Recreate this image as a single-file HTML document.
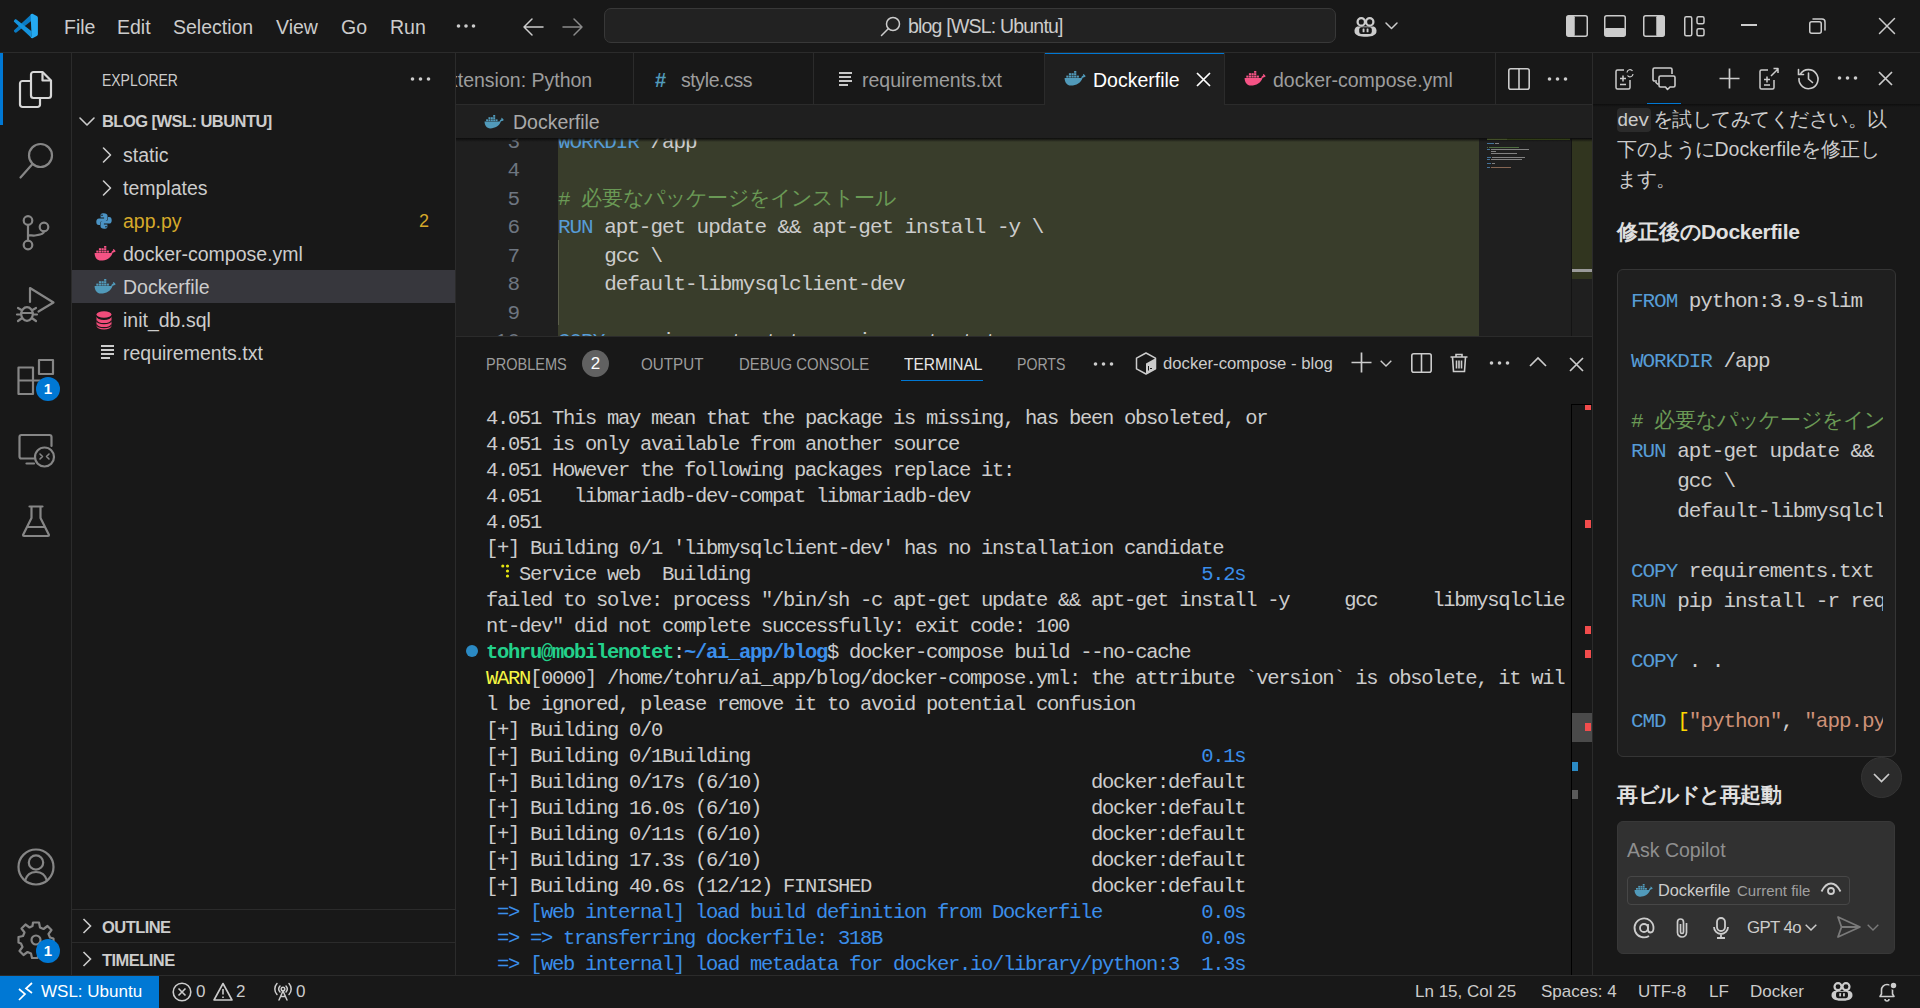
<!DOCTYPE html>
<html><head><meta charset="utf-8">
<style>
*{box-sizing:border-box;margin:0;padding:0}
html,body{width:1920px;height:1008px;overflow:hidden;background:#181818}
body{position:relative;font-family:"Liberation Sans",sans-serif;color:#cccccc;font-size:19.5px}
.a{position:absolute;white-space:pre}
.m{font-family:"Liberation Mono",monospace}
svg{position:absolute;overflow:visible}
.ic{fill:none;stroke:#cccccc;stroke-width:1.5;stroke-linecap:round;stroke-linejoin:round}
.hl{height:1px;background:#2b2b2b}
.vl{width:1px;background:#2b2b2b}
.j{display:inline-block;width:1em;letter-spacing:0;text-indent:0;overflow:visible}
</style></head><body>

<svg width="0" height="0" style="position:absolute">
<defs>
<symbol id="whale" viewBox="0 0 22 15">
 <path d="M0.6 7 H17.2 C17.4 5.6 18.3 4.6 19.3 4.4 L18.9 2.9 C20.2 3.2 21.6 4.3 21.6 5.6 C20.6 6.3 19.6 6.4 18.6 6.8 C17.3 11.8 12.2 14.6 7 14.6 C2.8 14.6 0.6 11 0.6 7 Z"/>
 <rect x="2.3" y="4.6" width="2.2" height="2"/><rect x="4.9" y="4.6" width="2.2" height="2"/><rect x="7.5" y="4.6" width="2.2" height="2"/><rect x="10.1" y="4.6" width="2.2" height="2"/><rect x="12.7" y="4.6" width="2.2" height="2"/>
 <rect x="4.9" y="2.2" width="2.2" height="2"/><rect x="7.5" y="2.2" width="2.2" height="2"/><rect x="10.1" y="2.2" width="2.2" height="2"/>
 <rect x="10.1" y="-0.2" width="2.2" height="2"/>
</symbol>
<symbol id="py" viewBox="0 0 16 16">
 <path d="M7.8 0.3 C4.6 0.3 4.6 1.7 4.6 2.8 V4.6 H8.1 V5.4 H3 C1.2 5.4 0.3 6.7 0.3 8.8 C0.3 10.9 1.2 12.1 2.8 12.1 H4 V10.3 C4 9 5 7.9 6.4 7.9 H9.6 C10.7 7.9 11.5 7.1 11.5 6 V2.8 C11.5 1.4 10.2 0.3 7.8 0.3 Z M6 1.5 A0.8 0.8 0 1 1 6 3.1 A0.8 0.8 0 1 1 6 1.5 Z" fill-rule="evenodd"/>
 <path d="M8.2 15.7 C11.4 15.7 11.4 14.3 11.4 13.2 V11.4 H7.9 V10.6 H13 C14.8 10.6 15.7 9.3 15.7 7.2 C15.7 5.1 14.8 3.9 13.2 3.9 H12 V5.7 C12 7 11 8.1 9.6 8.1 H6.4 C5.3 8.1 4.5 8.9 4.5 10 V13.2 C4.5 14.6 5.8 15.7 8.2 15.7 Z M10 14.5 A0.8 0.8 0 1 1 10 12.9 A0.8 0.8 0 1 1 10 14.5 Z" fill-rule="evenodd"/>
</symbol>
<symbol id="cop" viewBox="0 0 23 20">
 <path d="M3.2 9.5 C0.8 10.5 0 13 0.7 15.5 C1.8 18.8 6.5 19.8 11.5 19.8 C16.5 19.8 21.2 18.8 22.3 15.5 C23 13 22.2 10.5 19.8 9.5 Z" fill="#cccccc"/>
 <circle cx="7.3" cy="4.9" r="3.7" fill="none" stroke="#cccccc" stroke-width="2.3"/>
 <circle cx="15.7" cy="4.9" r="3.7" fill="none" stroke="#cccccc" stroke-width="2.3"/>
 <rect x="5.2" y="10.2" width="12.6" height="6.8" rx="2.2" fill="#181818"/>
 <rect x="8.6" y="11.6" width="1.9" height="3.6" rx="0.5" fill="#cccccc"/><rect x="12.6" y="11.6" width="1.9" height="3.6" rx="0.5" fill="#cccccc"/>
</symbol>
</defs></svg>
<!-- ============ TITLE BAR ============ -->
<div class="a" style="left:0;top:0;width:1920px;height:52px;background:#181818"></div>
<div class="a hl" style="left:0;top:52px;width:1920px"></div>
<!-- logo -->
<svg style="left:8px;top:8px" width="36" height="36" viewBox="0 0 36 36">
 <path d="M23.6 6 L23.6 12.8 L8.4 24.4 C7.8 24.8 7.2 24.8 6.7 24.3 L6.1 23.6 C5.7 23.1 5.8 22.5 6.3 22.1 Z" fill="#0a7ac2"/>
 <path d="M6.3 13.9 C5.8 13.5 5.7 12.9 6.1 12.4 L6.7 11.7 C7.2 11.2 7.8 11.2 8.4 11.6 L23.6 23.2 L23.6 30 Z" fill="#1593dd"/>
 <path d="M22.6 6.4 C23.3 5.8 24.2 5.7 25 6.1 L28.8 7.9 C29.5 8.3 29.9 8.9 29.9 9.7 V26.3 C29.9 27.1 29.5 27.7 28.8 28.1 L25 29.9 C24.2 30.3 23.3 30.2 22.6 29.6 L23.6 28.5 Z" fill="#25aaf2"/>
</svg>
<div class="a" style="left:64px;top:1px;height:52px;line-height:52px">File</div>
<div class="a" style="left:117px;top:1px;height:52px;line-height:52px">Edit</div>
<div class="a" style="left:173px;top:1px;height:52px;line-height:52px">Selection</div>
<div class="a" style="left:276px;top:1px;height:52px;line-height:52px">View</div>
<div class="a" style="left:341px;top:1px;height:52px;line-height:52px">Go</div>
<div class="a" style="left:390px;top:1px;height:52px;line-height:52px">Run</div>
<svg style="left:456px;top:22px" width="20" height="8"><circle cx="2.5" cy="4" r="1.8" fill="#ccc"/><circle cx="10" cy="4" r="1.8" fill="#ccc"/><circle cx="17.5" cy="4" r="1.8" fill="#ccc"/></svg>
<svg style="left:523px;top:18px" width="22" height="18" class="ic"><path d="M1 9 H20 M9 1 L1 9 L9 17" /></svg>
<svg style="left:562px;top:18px" width="22" height="18" class="ic" style="stroke:#888"><path d="M1 9 H20 M12 1 L20 9 L12 17" stroke="#8a8a8a"/></svg>
<!-- command center -->
<div class="a" style="left:604px;top:8px;width:732px;height:35px;border:1px solid #383838;border-radius:7px;background:#222222"></div>
<svg style="left:880px;top:16px" width="22" height="22" class="ic"><circle cx="13" cy="8" r="6.5"/><path d="M8.5 12.5 L1.5 19.5"/></svg>
<div class="a" style="left:908px;top:9px;height:35px;line-height:35px;letter-spacing:-0.8px">blog [WSL: Ubuntu]</div>
<!-- copilot icon -->
<svg style="left:1354px;top:17px" width="23" height="20"><use href="#cop"/></svg>
<svg style="left:1385px;top:22px" width="13" height="8" class="ic"><path d="M1 1 L6.5 6.5 L12 1"/></svg>
<!-- layout icons -->
<svg style="left:1566px;top:15px" width="22" height="22"><rect x="0.75" y="0.75" width="20.5" height="20.5" rx="2" fill="none" stroke="#ccc" stroke-width="1.5"/><rect x="0.75" y="0.75" width="8" height="20.5" rx="1.5" fill="#ccc"/></svg>
<svg style="left:1604px;top:15px" width="22" height="22"><rect x="0.75" y="0.75" width="20.5" height="20.5" rx="2" fill="none" stroke="#ccc" stroke-width="1.5"/><rect x="0.75" y="13" width="20.5" height="8.25" rx="1.5" fill="#ccc"/></svg>
<svg style="left:1643px;top:15px" width="22" height="22"><rect x="0.75" y="0.75" width="20.5" height="20.5" rx="2" fill="none" stroke="#ccc" stroke-width="1.5"/><rect x="13.25" y="0.75" width="8" height="20.5" rx="1.5" fill="#ccc"/></svg>
<svg style="left:1684px;top:16px" width="22" height="22" class="ic"><rect x="0.75" y="0.75" width="7" height="19" rx="1.5"/><rect x="13" y="0.75" width="7" height="7" rx="1.5"/><rect x="13" y="12.75" width="7" height="7" rx="1.5"/></svg>
<!-- window controls -->
<div class="a" style="left:1741px;top:24px;width:16px;height:2px;background:#ccc"></div>
<svg style="left:1809px;top:18px" width="17" height="16" class="ic"><rect x="0.75" y="3.75" width="11.5" height="11.5" rx="2"/><path d="M4 1 H13 A3 3 0 0 1 16 4 V12"/></svg>
<svg style="left:1879px;top:18px" width="16" height="16" class="ic" style="stroke-linecap:butt"><path d="M0.5 0.5 L15.5 15.5 M15.5 0.5 L0.5 15.5"/></svg>

<!-- ============ ACTIVITY BAR ============ -->
<div class="a vl" style="left:71px;top:53px;height:922px"></div>
<div class="a" style="left:0;top:53px;width:3px;height:72px;background:#0078d4"></div>
<!-- explorer -->
<svg style="left:19px;top:71px" width="34" height="37" viewBox="0 0 34 37" fill="none" stroke="#d7d7d7" stroke-width="2.2" stroke-linejoin="round">
 <path d="M11 10 H3.5 A2.5 2.5 0 0 0 1 12.5 V33.5 A2.5 2.5 0 0 0 3.5 36 H18.5 A2.5 2.5 0 0 0 21 33.5 V27"/>
 <path d="M12 3.5 A2.5 2.5 0 0 1 14.5 1 H23.5 L32 9.5 V24.5 A2.5 2.5 0 0 1 29.5 27 H14.5 A2.5 2.5 0 0 1 12 24.5 Z"/>
 <path d="M23.5 1 V9.5 H32"/>
</svg>
<!-- search -->
<svg style="left:0;top:0" width="72" height="975" fill="none" stroke="#868686" stroke-width="2.2" stroke-linecap="round" stroke-linejoin="round">
 <circle cx="40.5" cy="155.5" r="11.5"/><path d="M32.5 164 L20.5 177.5"/>
 <!-- scm -->
 <circle cx="28" cy="220.5" r="4.3"/><circle cx="44" cy="227" r="4.3"/><circle cx="28" cy="245" r="4.3"/>
 <path d="M28 225 V240.5"/><path d="M28 237 C28 234 31 236 35 235.5 C40 235 44 234 44 231.3"/>
 <!-- run & debug -->
 <path d="M30 302 V288 L53.5 302.5 L38.5 311.5"/>
 <ellipse cx="27" cy="314" rx="5.8" ry="6.8"/><path d="M21.2 313 H32.8 M18 308 L21.5 310 M36 308 L32.5 310 M17 314.5 H21 M37 314.5 H33 M18 321 L21.5 318.5 M36 321 L32.5 318.5"/>
 <!-- extensions -->
 <path d="M18.5 367.5 H33 V394 H18.5 Z M18.5 380.5 H33 M33 380.5 H40 M39 360 H53 V374 H39 Z"/>
 <!-- remote explorer -->
 <path d="M34 458.5 H21.5 A2 2 0 0 1 19.5 456.5 V437 A2 2 0 0 1 21.5 435 H49.5 A2 2 0 0 1 51.5 437 V446"/><path d="M26.5 463.5 H34"/>
 <circle cx="44.5" cy="457" r="9.5"/><path d="M40 454 L42.5 456.5 L40 459 M49 454 L46.5 456.5 L49 459" stroke-width="1.6"/>
 <!-- testing -->
 <path d="M29.5 506.5 H42.5 M31.5 506.5 V518 L23 535 A1 1 0 0 0 24 536 H48 A1 1 0 0 0 49 535 L40.5 518 V506.5 M27 527 H45"/>
 <!-- account -->
 <circle cx="36" cy="867" r="17.5"/><circle cx="36" cy="862.5" r="7.2"/><path d="M25 880.5 C27 874 31.5 872 36 872 C40.5 872 45 874 47 880.5"/>
</svg>
<!-- gear -->
<svg style="left:17px;top:921px" width="38" height="38" viewBox="-19 -19 38 38" fill="none" stroke="#868686" stroke-width="2.2" stroke-linejoin="round">
 <path d="M-3 -17.5 H3 L4 -12.5 L7.5 -11 L11.5 -14 L15.5 -10 L12.5 -6 L14 -2.5 L17.5 -1.5 V4 L12.5 5 L11 8.5 L14 12.5 L10 16.5 L6 13.5 L2.5 15 L1.5 18 H-4 L-5 13.5 L-8.5 12 L-12.5 15 L-16.5 11 L-13.5 7 L-15 3.5 L-17.5 2.5 V-3 L-13 -4 L-11.5 -7.5 L-14.5 -11.5 L-10.5 -15.5 L-6.5 -12.5 L-3.5 -14 Z"/>
 <circle cx="0" cy="0" r="4.5"/>
</svg>
<!-- badges -->
<div class="a" style="left:36px;top:377px;width:24px;height:24px;border-radius:12px;background:#0078d4;color:#fff;font-size:15px;font-weight:700;text-align:center;line-height:24px">1</div>
<div class="a" style="left:36px;top:939px;width:24px;height:24px;border-radius:12px;background:#0078d4;color:#fff;font-size:15px;font-weight:700;text-align:center;line-height:24px">1</div>
<!-- ============ SIDEBAR ============ -->
<div class="a vl" style="left:455px;top:53px;height:922px"></div>
<div class="a" style="left:102px;top:62px;height:36px;line-height:36px;font-size:16.5px;transform:scaleX(0.845);transform-origin:0 0">EXPLORER</div>
<svg style="left:410px;top:76px" width="21" height="6"><circle cx="2.5" cy="3" r="1.8" fill="#ccc"/><circle cx="10.5" cy="3" r="1.8" fill="#ccc"/><circle cx="18.5" cy="3" r="1.8" fill="#ccc"/></svg>
<svg style="left:79px;top:117px" width="16" height="10" class="ic" style="stroke-width:1.6"><path d="M1 1 L8 8 L15 1" stroke-width="1.6"/></svg>
<div class="a" style="left:102px;top:105px;height:33px;line-height:33px;font-size:16.5px;font-weight:700;letter-spacing:-0.55px">BLOG [WSL: UBUNTU]</div>
<div class="a" style="left:72px;top:270px;width:383px;height:33px;background:#37373d"></div>
<svg style="left:102px;top:147px" width="10" height="16" class="ic"><path d="M1.5 1 L8.5 8 L1.5 15" stroke-width="1.6"/></svg>
<div class="a" style="left:123px;top:139px;height:33px;line-height:33px">static</div>
<svg style="left:102px;top:180px" width="10" height="16" class="ic"><path d="M1.5 1 L8.5 8 L1.5 15" stroke-width="1.6"/></svg>
<div class="a" style="left:123px;top:172px;height:33px;line-height:33px">templates</div>
<div class="a" style="left:123px;top:205px;height:33px;line-height:33px;color:#d5a92a">app.py</div>
<div class="a" style="left:419px;top:205px;height:33px;line-height:33px;color:#d5a92a;font-size:18px">2</div>
<div class="a" style="left:123px;top:238px;height:33px;line-height:33px">docker-compose.yml</div>
<div class="a" style="left:123px;top:271px;height:33px;line-height:33px">Dockerfile</div>
<div class="a" style="left:123px;top:304px;height:33px;line-height:33px">init_db.sql</div>
<div class="a" style="left:123px;top:337px;height:33px;line-height:33px">requirements.txt</div>
<!-- file icons -->
<svg style="left:96px;top:213px" width="16" height="16" fill="#4b93c4"><use href="#py"/></svg>
<svg style="left:94px;top:246px" width="22" height="15" fill="#f55385"><use href="#whale"/></svg>
<svg style="left:94px;top:279px" width="22" height="15" fill="#519aba"><use href="#whale"/></svg>
<svg style="left:96px;top:311px" width="16" height="19"><ellipse cx="8" cy="3.5" rx="7.5" ry="3.2" fill="#f14c7a"/><path d="M0.5 5.5 V15 A7.5 3.5 0 0 0 15.5 15 V5.5 A7.5 3.5 0 0 1 0.5 5.5 Z" fill="#f14c7a"/><path d="M0.5 9.5 A7.5 3.2 0 0 0 15.5 9.5 M0.5 13.5 A7.5 3.2 0 0 0 15.5 13.5" stroke="#181818" stroke-width="1.3" fill="none"/></svg>
<svg style="left:101px;top:345px" width="14" height="14"><path d="M0 1 H13 M0 5 H13 M0 9 H13 M0 13 H9" stroke="#cccccc" stroke-width="1.8"/></svg>
<!-- outline / timeline -->
<div class="a hl" style="left:72px;top:909px;width:383px"></div>
<svg style="left:82px;top:918px" width="10" height="16"><path d="M1.5 1 L8.5 8 L1.5 15" stroke="#ccc" stroke-width="1.6" fill="none"/></svg>
<div class="a" style="left:102px;top:911px;height:32px;line-height:32px;font-size:16.5px;font-weight:700;letter-spacing:-0.55px">OUTLINE</div>
<div class="a hl" style="left:72px;top:942px;width:383px"></div>
<svg style="left:82px;top:951px" width="10" height="16"><path d="M1.5 1 L8.5 8 L1.5 15" stroke="#ccc" stroke-width="1.6" fill="none"/></svg>
<div class="a" style="left:102px;top:944px;height:32px;line-height:32px;font-size:16.5px;font-weight:700;letter-spacing:-0.55px">TIMELINE</div>

<!-- ============ EDITOR ============ -->
<div class="a" style="left:456px;top:104px;width:1136px;height:232px;background:#1f1f1f"></div>
<!-- tabs -->
<div class="a hl" style="left:456px;top:104px;width:1136px"></div>
<div class="a vl" style="left:633px;top:53px;height:51px"></div>
<div class="a vl" style="left:813px;top:53px;height:51px"></div>
<div class="a vl" style="left:1044px;top:53px;height:51px"></div>
<div class="a vl" style="left:1224px;top:53px;height:51px"></div>
<div class="a vl" style="left:1495px;top:53px;height:51px"></div>
<div class="a" style="left:1045px;top:53px;width:179px;height:52px;background:#1f1f1f;border-top:1px solid #0078d4"></div>
<div class="a" style="left:456px;top:53px;width:177px;height:51px;overflow:hidden"><div class="a" style="left:-21px;top:2px;height:51px;line-height:51px;color:#9d9d9d">Extension: Python</div></div>
<div class="a" style="left:655px;top:55px;height:51px;line-height:51px;color:#519aba;font-weight:700;font-size:20px">#</div>
<div class="a" style="left:681px;top:55px;height:51px;line-height:51px;color:#9d9d9d;letter-spacing:-0.4px">style.css</div>
<svg style="left:839px;top:72px" width="14" height="14"><path d="M0 1 H13 M0 5 H12 M0 9 H13 M0 13 H9" stroke="#c8c8c8" stroke-width="1.8"/></svg>
<div class="a" style="left:862px;top:55px;height:51px;line-height:51px;color:#9d9d9d">requirements.txt</div>
<svg style="left:1064px;top:71px" width="22" height="15" fill="#519aba"><use href="#whale"/></svg>
<div class="a" style="left:1093px;top:55px;height:51px;line-height:51px;color:#ffffff">Dockerfile</div>
<svg style="left:1196px;top:72px" width="15" height="15"><path d="M1 1 L14 14 M14 1 L1 14" stroke="#ffffff" stroke-width="1.7"/></svg>
<svg style="left:1244px;top:71px" width="22" height="15" fill="#f55385"><use href="#whale"/></svg>
<div class="a" style="left:1273px;top:55px;height:51px;line-height:51px;color:#9d9d9d">docker-compose.yml</div>
<svg style="left:1508px;top:68px" width="22" height="22" fill="none" stroke="#ccc" stroke-width="1.6"><rect x="0.8" y="0.8" width="20.4" height="20.4" rx="2"/><path d="M11 1 V21"/></svg>
<svg style="left:1547px;top:76px" width="21" height="6"><circle cx="2.5" cy="3" r="1.8" fill="#ccc"/><circle cx="10.5" cy="3" r="1.8" fill="#ccc"/><circle cx="18.5" cy="3" r="1.8" fill="#ccc"/></svg>
<!-- breadcrumb -->
<svg style="left:484px;top:115px" width="20" height="14" fill="#519aba"><use href="#whale"/></svg>
<div class="a" style="left:513px;top:105px;height:34px;line-height:34px;color:#a9a9a9">Dockerfile</div>
<!-- code -->
<div class="a" style="left:456px;top:138px;width:1136px;height:198px;overflow:hidden">
 <div class="a" style="left:102px;top:0;width:921px;height:198px;background:#393d2b"></div>
 <div class="a" style="left:102px;top:102px;width:1px;height:85px;background:#5a5d4a"></div>
 <div class="a m" style="left:0;top:-9.25px;width:64px;font-size:21px;line-height:28.5px;color:#6e7681;text-align:right">3
4
5
6
7
8
9
10</div>
 <div class="a m" style="left:102px;top:-9.25px;font-size:21px;line-height:28.5px;letter-spacing:-1.05px;color:#cccccc"><span style="color:#569cd6">WORKDIR</span> /app

<span style="color:#6a9955"># <span class="j">必</span><span class="j">要</span><span class="j">な</span><span class="j">パ</span><span class="j">ッ</span><span class="j">ケ</span><span class="j">ー</span><span class="j">ジ</span><span class="j">を</span><span class="j">イ</span><span class="j">ン</span><span class="j">ス</span><span class="j">ト</span><span class="j">ー</span><span class="j">ル</span></span>
<span style="color:#569cd6">RUN</span> apt-get update &amp;&amp; apt-get install -y \
    gcc \
    default-libmysqlclient-dev

<span style="color:#569cd6">COPY</span> requirements.txt requirements.txt</div>
 <!-- minimap -->
 <div class="a" style="left:1023px;top:0;width:92px;height:198px;background:#1f1f1f"></div>
 <div class="a" style="left:1031px;top:0;width:83px;height:2px;background:#6f8f2a"></div>
 <div class="a" style="left:1031px;top:0;width:20px;height:2px;background:#9fbf5a"></div>
 <div class="a" style="left:1031px;top:4.5px;width:7px;height:1.5px;background:#4f88b8;opacity:.8"></div>
 <div class="a" style="left:1039px;top:4.5px;width:4px;height:1.5px;background:#9a9a9a;opacity:.8"></div>
 <div class="a" style="left:1031px;top:8.5px;width:1px;height:1.5px;background:#5a8048;opacity:.8"></div>
 <div class="a" style="left:1033px;top:8.5px;width:30px;height:1.5px;background:#5a8048;opacity:.8"></div>
 <div class="a" style="left:1031px;top:10.5px;width:3px;height:1.5px;background:#4f88b8;opacity:.8"></div>
 <div class="a" style="left:1035px;top:10.5px;width:38px;height:1.5px;background:#9a9a9a;opacity:.8"></div>
 <div class="a" style="left:1035px;top:12.5px;width:5px;height:1.5px;background:#9a9a9a;opacity:.8"></div>
 <div class="a" style="left:1035px;top:14.5px;width:26px;height:1.5px;background:#9a9a9a;opacity:.8"></div>
 <div class="a" style="left:1031px;top:18.5px;width:4px;height:1.5px;background:#4f88b8;opacity:.8"></div>
 <div class="a" style="left:1036px;top:18.5px;width:33px;height:1.5px;background:#9a9a9a;opacity:.8"></div>
 <div class="a" style="left:1031px;top:20.5px;width:3px;height:1.5px;background:#4f88b8;opacity:.8"></div>
 <div class="a" style="left:1035px;top:20.5px;width:31px;height:1.5px;background:#9a9a9a;opacity:.8"></div>
 <div class="a" style="left:1031px;top:24.5px;width:4px;height:1.5px;background:#4f88b8;opacity:.8"></div>
 <div class="a" style="left:1036px;top:24.5px;width:3px;height:1.5px;background:#9a9a9a;opacity:.8"></div>
 <div class="a" style="left:1031px;top:28.5px;width:3px;height:1.5px;background:#4f88b8;opacity:.8"></div>
 <div class="a" style="left:1035px;top:28.5px;width:20px;height:1.5px;background:#a07860;opacity:.8"></div>
 <div class="a" style="left:1115px;top:0;width:1px;height:198px;background:#141414"></div>
 <div class="a" style="left:1116px;top:1px;width:20px;height:140px;background:#31351f"></div>
 <div class="a" style="left:1116px;top:131px;width:20px;height:3px;background:#9a9a9a"></div>
</div>
<div class="a" style="left:456px;top:138px;width:1136px;height:4px;background:linear-gradient(#0c0c0c,rgba(0,0,0,0))"></div>

<!-- ============ PANEL ============ -->
<div class="a hl" style="left:456px;top:336px;width:1136px"></div>
<div class="a" style="left:486px;top:347px;height:34px;line-height:34px;font-size:16.5px;transform:scaleX(0.88);transform-origin:0 0;color:#9d9d9d">PROBLEMS</div>
<div class="a" style="left:582px;top:350px;width:27px;height:27px;border-radius:14px;background:#616161;color:#fff;font-size:17px;text-align:center;line-height:27px">2</div>
<div class="a" style="left:641px;top:347px;height:34px;line-height:34px;font-size:16.5px;transform:scaleX(0.92);transform-origin:0 0;color:#9d9d9d">OUTPUT</div>
<div class="a" style="left:739px;top:347px;height:34px;line-height:34px;font-size:16.5px;transform:scaleX(0.905);transform-origin:0 0;color:#9d9d9d">DEBUG CONSOLE</div>
<div class="a" style="left:904px;top:347px;height:34px;line-height:34px;font-size:16.5px;transform:scaleX(0.94);transform-origin:0 0;color:#e7e7e7">TERMINAL</div>
<div class="a" style="left:901px;top:379.5px;width:82px;height:1.5px;background:#0078d4"></div>
<div class="a" style="left:1017px;top:347px;height:34px;line-height:34px;font-size:16.5px;transform:scaleX(0.855);transform-origin:0 0;color:#9d9d9d">PORTS</div>
<svg style="left:1093px;top:361px" width="21" height="6"><circle cx="2.5" cy="3" r="1.8" fill="#ccc"/><circle cx="10.5" cy="3" r="1.8" fill="#ccc"/><circle cx="18.5" cy="3" r="1.8" fill="#ccc"/></svg>
<svg style="left:1135px;top:352px" width="22" height="23" viewBox="0 0 22 23"><path d="M11 1 L20.5 6.2 V16.8 L11 22 L1.5 16.8 V6.2 Z" fill="none" stroke="#ccc" stroke-width="1.5" stroke-linejoin="round"/><path d="M11 11.5 L20.5 6.2 V16.8 L11 22 Z" fill="#ccc"/><path d="M13.5 14 V18.5 M15 16.5 H17" stroke="#181818" stroke-width="1"/></svg>
<div class="a" style="left:1163px;top:347px;height:34px;line-height:34px;font-size:16.7px;color:#cccccc">docker-compose - blog</div>
<svg style="left:1351px;top:352px" width="21" height="21"><path d="M10.5 0.5 V20.5 M0.5 10.5 H20.5" stroke="#ccc" stroke-width="1.7"/></svg>
<svg style="left:1380px;top:360px" width="12" height="7"><path d="M0.7 0.7 L6 6 L11.3 0.7" stroke="#ccc" stroke-width="1.4" fill="none"/></svg>
<svg style="left:1411px;top:353px" width="21" height="20"><rect x="0.8" y="0.8" width="19.4" height="18.4" rx="2" fill="none" stroke="#ccc" stroke-width="1.6"/><path d="M10.5 1 V19" stroke="#ccc" stroke-width="1.6"/></svg>
<svg style="left:1450px;top:353px" width="18" height="20" fill="none" stroke="#ccc" stroke-width="1.6"><path d="M0.5 4 H17.5 M6 4 V1.5 H12 V4 M2.5 4 L3.5 18.5 H14.5 L15.5 4 M6.5 7.5 V15.5 M9 7.5 V15.5 M11.5 7.5 V15.5"/></svg>
<svg style="left:1489px;top:360px" width="21" height="6"><circle cx="2.5" cy="3" r="1.8" fill="#ccc"/><circle cx="10.5" cy="3" r="1.8" fill="#ccc"/><circle cx="18.5" cy="3" r="1.8" fill="#ccc"/></svg>
<svg style="left:1529px;top:357px" width="18" height="10"><path d="M1 9 L9 1 L17 9" stroke="#ccc" stroke-width="1.7" fill="none"/></svg>
<svg style="left:1569px;top:357px" width="15" height="15"><path d="M1 1 L14 14 M14 1 L1 14" stroke="#ccc" stroke-width="1.7"/></svg>
<!-- terminal -->
<div class="a m" style="left:486px;top:406px;font-size:20.5px;line-height:26px;letter-spacing:-1.3px;color:#cccccc">4.051 This may mean that the package is missing, has been obsoleted, or
4.051 is only available from another source
4.051 However the following packages replace it:
4.051   libmariadb-dev-compat libmariadb-dev
4.051
[+] Building 0/1 'libmysqlclient-dev' has no installation candidate
   Service web  Building                                         <span style="color:#3b8eea">5.2s</span>
failed to solve: process "/bin/sh -c apt-get update &amp;&amp; apt-get install -y     gcc     libmysqlclie
nt-dev" did not complete successfully: exit code: 100
<b style="color:#23d18b">tohru@mobilenotet</b>:<b style="color:#3b8eea">~/ai_app/blog</b>$ docker-compose build --no-cache
<span style="color:#f5f543">WARN</span>[0000] /home/tohru/ai_app/blog/docker-compose.yml: the attribute `version` is obsolete, it wil
l be ignored, please remove it to avoid potential confusion
[+] Building 0/0
[+] Building 0/1Building                                         <span style="color:#3b8eea">0.1s</span>
[+] Building 0/17s (6/10)                              docker:default
[+] Building 16.0s (6/10)                              docker:default
[+] Building 0/11s (6/10)                              docker:default
[+] Building 17.3s (6/10)                              docker:default
[+] Building 40.6s (12/12) FINISHED                    docker:default
<span style="color:#3b8eea"> => [web internal] load build definition from Dockerfile         0.0s</span>
<span style="color:#3b8eea"> => => transferring dockerfile: 318B                             0.0s</span>
<span style="color:#3b8eea"> => [web internal] load metadata for docker.io/library/python:3  1.3s</span></div>
<svg style="left:501px;top:564px" width="9" height="14" fill="#e5e510"><circle cx="1.8" cy="2" r="1.6"/><circle cx="6.5" cy="2" r="1.6"/><circle cx="6.5" cy="7" r="1.6"/><circle cx="6.5" cy="12" r="1.6"/></svg>
<div class="a" style="left:466px;top:645px;width:12px;height:12px;border-radius:6px;background:#2b8ac4"></div>
<!-- terminal scrollbar -->
<div class="a" style="left:1571px;top:404px;width:1px;height:571px;background:#000"></div>
<div class="a" style="left:1571px;top:404px;width:21px;height:1px;background:#000"></div>
<div class="a" style="left:1572px;top:713px;width:20px;height:29px;background:#4a4a4a"></div>
<div class="a" style="left:1585px;top:405px;width:6px;height:5px;background:#f14c4c"></div>
<div class="a" style="left:1585px;top:520px;width:6px;height:8px;background:#f14c4c"></div>
<div class="a" style="left:1585px;top:626px;width:6px;height:8px;background:#f14c4c"></div>
<div class="a" style="left:1585px;top:650px;width:6px;height:8px;background:#f14c4c"></div>
<div class="a" style="left:1585px;top:723px;width:6px;height:8px;background:#f14c4c"></div>
<div class="a" style="left:1572px;top:762px;width:6px;height:9px;background:#2b8ac4"></div>
<div class="a" style="left:1572px;top:790px;width:6px;height:9px;background:#5a5a5a"></div>

<!-- ============ CHAT ============ -->
<div class="a vl" style="left:1592px;top:53px;height:922px"></div>
<!-- chat body text (clipped) -->
<div class="a" style="left:1593px;top:104px;width:327px;height:871px;overflow:hidden">
 <div class="a" style="left:24px;top:3.5px;width:34px;height:24px;border-radius:4px;background:#2b2b2b"></div>
 <div class="a" style="left:24px;top:0;height:30px;line-height:30px;color:#cccccc"><span class="m" style="font-size:19px;letter-spacing:-0.9px">dev</span><span style="margin-left:4px"><span class="j">を</span><span class="j">試</span><span class="j">し</span><span class="j">て</span><span class="j">み</span><span class="j">て</span><span class="j">く</span><span class="j">だ</span><span class="j">さ</span><span class="j">い</span><span class="j">。</span><span class="j">以</span></span></div>
 <div class="a" style="left:24px;top:30px;height:30px;line-height:30px;color:#cccccc"><span class="j">下</span><span class="j">の</span><span class="j">よ</span><span class="j">う</span><span class="j">に</span>Dockerfile<span class="j">を</span><span class="j">修</span><span class="j">正</span><span class="j">し</span></div>
 <div class="a" style="left:24px;top:59.5px;height:30px;line-height:30px;color:#cccccc"><span class="j">ま</span><span class="j">す</span><span class="j">。</span></div>
 <div class="a" style="left:24px;top:113px;height:30px;line-height:30px;font-size:21px;font-weight:700;letter-spacing:-0.3px;color:#e0e0e0"><span class="j">修</span><span class="j">正</span><span class="j">後</span><span class="j">の</span>Dockerfile</div>
 <div class="a" style="left:24px;top:165px;width:279px;height:488px;border:1px solid #353535;border-radius:6px;background:#1f1f1f;overflow:hidden">
  <div class="a" style="left:12px;top:0;width:253px;height:486px;overflow:hidden"><div class="a m" style="left:1px;top:17px;font-size:21px;line-height:30px;letter-spacing:-1.05px;color:#cccccc"><span style="color:#569cd6">FROM</span> python:3.9-slim

<span style="color:#569cd6">WORKDIR</span> /app

<span style="color:#6a9955"># <span class="j">必</span><span class="j">要</span><span class="j">な</span><span class="j">パ</span><span class="j">ッ</span><span class="j">ケ</span><span class="j">ー</span><span class="j">ジ</span><span class="j">を</span><span class="j">イ</span><span class="j">ン</span><span class="j">ス</span><span class="j">ト</span><span class="j">ー</span><span class="j">ル</span></span>
<span style="color:#569cd6">RUN</span> apt-get update &amp;&amp; apt-get install -y \
    gcc \
    default-libmysqlclient-dev

<span style="color:#569cd6">COPY</span> requirements.txt .
<span style="color:#569cd6">RUN</span> pip install -r requirements.txt

<span style="color:#569cd6">COPY</span> . .

<span style="color:#569cd6">CMD</span> <span style="color:#ffd700">[</span><span style="color:#ce9178">"python"</span>, <span style="color:#ce9178">"app.py"</span><span style="color:#ffd700">]</span></div></div>
 </div>
 <div class="a" style="left:24px;top:676px;height:30px;line-height:30px;font-size:20.5px;font-weight:700;color:#e0e0e0"><span class="j">再</span><span class="j">ビ</span><span class="j">ル</span><span class="j">ド</span><span class="j">と</span><span class="j">再</span><span class="j">起</span><span class="j">動</span></div>
</div>
<!-- header -->
<div class="a" style="left:1593px;top:53px;width:327px;height:51px;background:#181818"></div>
<div class="a" style="left:1593px;top:104px;width:327px;height:3px;background:linear-gradient(#0e0e0e,rgba(0,0,0,0))"></div>
<svg style="left:1615px;top:68px" width="20" height="22" fill="none" stroke="#ccc" stroke-width="1.5" stroke-linejoin="round"><path d="M9 2 H2.5 A1.5 1.5 0 0 0 1 3.5 V19.5 A1.5 1.5 0 0 0 2.5 21 H13.5 A1.5 1.5 0 0 0 15 19.5 V12"/><path d="M8 7.5 V13.5 M5 10.5 H11 M5 16.5 H11"/><path d="M12 4.5 A3 3 0 0 1 17.5 3 M18 6 A3 3 0 0 1 12.5 7.5" stroke-width="1.2"/></svg>
<svg style="left:1652px;top:67px" width="24" height="24" fill="none" stroke="#ccc" stroke-width="1.6" stroke-linejoin="round"><path d="M5 14 H2.5 A1.5 1.5 0 0 1 1 12.5 V2.5 A1.5 1.5 0 0 1 2.5 1 H18.5 A1.5 1.5 0 0 1 20 2.5 V7"/><path d="M6 17.5 L3.5 15 M8.5 9 H21.5 A1.5 1.5 0 0 1 23 10.5 V18.5 A1.5 1.5 0 0 1 21.5 20 H18 L15.5 22.5 L13.5 20 H8.5 A1.5 1.5 0 0 1 7 18.5 V10.5 A1.5 1.5 0 0 1 8.5 9 Z"/></svg>
<div class="a" style="left:1647px;top:103px;width:34px;height:1px;background:#0078d4"></div>
<svg style="left:1719px;top:68px" width="21" height="21"><path d="M10.5 0.5 V20.5 M0.5 10.5 H20.5" stroke="#ccc" stroke-width="1.7"/></svg>
<svg style="left:1759px;top:67px" width="20" height="23" fill="none" stroke="#ccc" stroke-width="1.5" stroke-linejoin="round"><path d="M9 3 H2.5 A1.5 1.5 0 0 0 1 4.5 V20.5 A1.5 1.5 0 0 0 2.5 22 H13.5 A1.5 1.5 0 0 0 15 20.5 V13"/><path d="M8 9.5 V15.5 M5 12.5 H11 M5 18 H11"/><path d="M12 9 L19 2 M14.5 1.5 H19 V6"/></svg>
<svg style="left:1797px;top:67px" width="23" height="23" fill="none" stroke="#ccc" stroke-width="1.6" stroke-linecap="round"><path d="M3.5 7 A9.5 9.5 0 1 1 2 11.5"/><path d="M1.5 2.5 V7.5 H6.5"/><path d="M11.5 6 V12 L15.5 15.5"/></svg>
<svg style="left:1837px;top:75px" width="21" height="6"><circle cx="2.5" cy="3" r="1.8" fill="#ccc"/><circle cx="10.5" cy="3" r="1.8" fill="#ccc"/><circle cx="18.5" cy="3" r="1.8" fill="#ccc"/></svg>
<svg style="left:1878px;top:71px" width="15" height="15"><path d="M1 1 L14 14 M14 1 L1 14" stroke="#ccc" stroke-width="1.7"/></svg>
<!-- scroll down button -->
<div class="a" style="left:1861px;top:757px;width:41px;height:41px;border-radius:21px;background:#2b2b2b;border:1px solid #353535"></div>
<svg style="left:1873px;top:773px" width="17" height="10"><path d="M1 1 L8.5 8.5 L16 1" stroke="#ccc" stroke-width="1.7" fill="none"/></svg>
<!-- input -->
<div class="a" style="left:1617px;top:821px;width:278px;height:133px;border-radius:6px;background:#313131;border:1px solid #383838"></div>
<div class="a" style="left:1627px;top:835px;height:30px;line-height:30px;color:#8f8f8f">Ask Copilot</div>
<div class="a" style="left:1627px;top:876px;width:223px;height:29px;border-radius:4px;border:1px solid #474747"></div>
<svg style="left:1634px;top:884px" width="19" height="13" fill="#519aba"><use href="#whale"/></svg>
<div class="a" style="left:1658px;top:876px;height:29px;line-height:29px;font-size:16.3px;color:#cccccc">Dockerfile</div>
<div class="a" style="left:1737px;top:876px;height:29px;line-height:29px;font-size:15px;color:#a0a0a0">Current file</div>
<svg style="left:1820px;top:882px" width="22" height="14" fill="none" stroke="#ccc" stroke-width="1.8"><path d="M1.5 9.5 C4.5 3.5 8 1.5 11 1.5 C14 1.5 17.5 3.5 20.5 9.5"/><circle cx="11" cy="9" r="3"/></svg>
<svg style="left:1633px;top:917px" width="22" height="22" fill="none" stroke="#ccc" stroke-width="1.8"><circle cx="11" cy="11" r="4"/><path d="M15 7 V12.5 C15 14.5 16 15.5 17.5 15.5 C19.5 15.5 20.5 13.5 20.5 11 A9.5 9.5 0 1 0 16 19"/></svg>
<svg style="left:1675px;top:917px" width="14" height="22" fill="none" stroke="#ccc" stroke-width="1.7"><path d="M11.5 6 V15.5 A4.5 4.5 0 0 1 2.5 15.5 V5 A3 3 0 0 1 8.5 5 V15 A1.5 1.5 0 0 1 5.5 15 V7"/></svg>
<svg style="left:1713px;top:917px" width="16" height="22" fill="none" stroke="#ccc" stroke-width="1.8"><rect x="4" y="1" width="8" height="13" rx="4"/><path d="M1 10 A7 7 0 0 0 15 10 M8 17 V21 M4 21 H12"/></svg>
<div class="a" style="left:1747px;top:913px;height:29px;line-height:29px;font-size:16.8px;letter-spacing:-0.6px;color:#cccccc">GPT 4o</div>
<svg style="left:1805px;top:924px" width="12" height="7"><path d="M0.7 0.7 L6 6 L11.3 0.7" stroke="#ccc" stroke-width="1.5" fill="none"/></svg>
<svg style="left:1837px;top:916px" width="24" height="22" fill="none" stroke="#7a7a7a" stroke-width="1.8" stroke-linejoin="round"><path d="M1 1 L23 11 L1 21 L4.5 11 Z M4.5 11 H23"/></svg>
<svg style="left:1867px;top:924px" width="12" height="7"><path d="M0.7 0.7 L6 6 L11.3 0.7" stroke="#7a7a7a" stroke-width="1.4" fill="none"/></svg>

<!-- ============ STATUS BAR ============ -->
<div class="a hl" style="left:0;top:975px;width:1920px"></div>
<div class="a" style="left:0;top:976px;width:159px;height:32px;background:#0078d4"></div>
<svg style="left:18px;top:982px" width="15" height="19" fill="none" stroke="#fff" stroke-width="1.7"><path d="M1 7 L7 12 L1 18 M14 1 L8 6.5 L14 11"/></svg>
<div class="a" style="left:41px;top:976px;height:32px;line-height:32px;font-size:17px;color:#ffffff">WSL: Ubuntu</div>
<svg style="left:172px;top:982px" width="20" height="20" fill="none" stroke="#ccc" stroke-width="1.6"><circle cx="10" cy="10" r="8.8"/><path d="M6.5 6.5 L13.5 13.5 M13.5 6.5 L6.5 13.5"/></svg>
<div class="a" style="left:196px;top:976px;height:32px;line-height:32px;font-size:17px;color:#cccccc">0</div>
<svg style="left:213px;top:982px" width="20" height="19" fill="none" stroke="#ccc" stroke-width="1.6" stroke-linejoin="round"><path d="M10 1.5 L19 18 H1 Z"/><path d="M10 7 V12.5 M10 14.5 V16"/></svg>
<div class="a" style="left:236px;top:976px;height:32px;line-height:32px;font-size:17px;color:#cccccc">2</div>
<svg style="left:273px;top:982px" width="20" height="19" fill="none" stroke="#ccc" stroke-width="1.5" stroke-linecap="round"><circle cx="10" cy="7" r="1.8"/><path d="M7 4 A4.5 4.5 0 0 0 7 10 M13 4 A4.5 4.5 0 0 1 13 10 M4 1.5 A8 8 0 0 0 4 12.5 M16 1.5 A8 8 0 0 1 16 12.5 M10 9 L6 18 M10 9 L14 18 M7.5 14.5 H12.5"/></svg>
<div class="a" style="left:296px;top:976px;height:32px;line-height:32px;font-size:17px;color:#cccccc">0</div>
<div class="a" style="left:1415px;top:976px;height:32px;line-height:32px;font-size:17px;color:#cccccc">Ln 15, Col 25</div>
<div class="a" style="left:1541px;top:976px;height:32px;line-height:32px;font-size:17px;color:#cccccc">Spaces: 4</div>
<div class="a" style="left:1638px;top:976px;height:32px;line-height:32px;font-size:17px;color:#cccccc">UTF-8</div>
<div class="a" style="left:1709px;top:976px;height:32px;line-height:32px;font-size:17px;color:#cccccc">LF</div>
<div class="a" style="left:1750px;top:976px;height:32px;line-height:32px;font-size:17px;color:#cccccc">Docker</div>
<svg style="left:1831px;top:982px" width="22" height="19" viewBox="0 0 23 20"><use href="#cop"/></svg>
<svg style="left:1877px;top:981px" width="21" height="21" fill="none" stroke="#ccc" stroke-width="1.6" stroke-linejoin="round"><path d="M3 15.5 H17 L15.5 13 V9 A5.5 5.5 0 0 0 4.5 9 V13 Z M8 18 A2 2 0 0 0 12 18"/><circle cx="16.5" cy="4.5" r="3.5" fill="#ccc" stroke="#181818" stroke-width="1.5"/></svg>

</body></html>
